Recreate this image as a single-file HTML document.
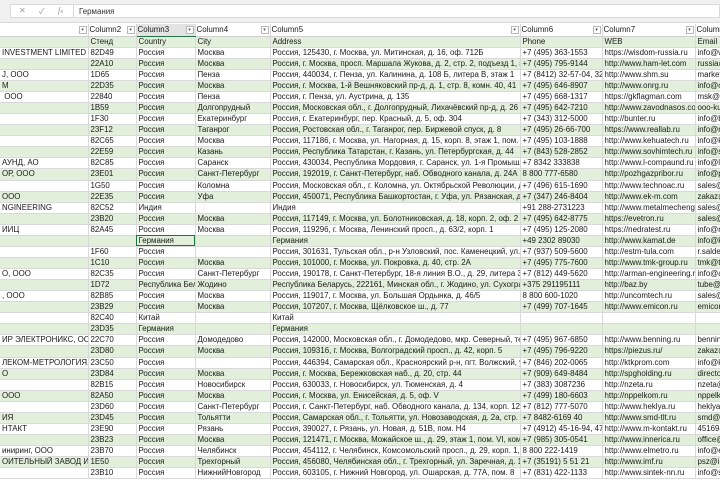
<!DOCTYPE html>
<html><head><meta charset="utf-8"><style>
*{margin:0;padding:0;box-sizing:border-box}
body{width:720px;height:480px;overflow:hidden;background:#fff;font-family:"Liberation Sans","Noto Sans CJK SC",sans-serif;font-size:7.9px;color:#1a1a1a;position:relative}
#fb{position:absolute;left:0;top:0;width:720px;height:23px;background:#f0f0f0;border-bottom:1px solid #d8d8d8}
#fbox{position:absolute;left:10px;top:4px;width:710px;height:14px;background:#fff;border:1px solid #dadada}
#fdiv{position:absolute;left:62px;top:0;width:1px;height:12px;background:#dadada}
.ic{position:absolute;top:1px;color:#9a9a9a;font-size:8px}
#ftxt{position:absolute;left:68px;top:2px;font-size:7.9px;color:#333}
table{position:absolute;left:0;top:24px;border-collapse:collapse;table-layout:fixed;width:720px}
td{height:11.07px;padding:0 0 0 2px;border-right:1px solid #d9d9d9;border-bottom:1px solid #d9d9d9;white-space:nowrap;overflow:hidden;line-height:10px;vertical-align:middle}
tr.h td{height:12.2px;background:#fff;position:relative;border-bottom:1px solid #cfcfcf;padding-left:1px}
tr.h td.sel{background:#e3e3e3;border-bottom:1px solid #217346}
.dd{position:absolute;right:1px;top:2px;width:8px;height:8px;border:1px solid #b8b8b8;background:#fff;font-size:5px;line-height:7px;text-align:center;color:#555}
tr:nth-child(even) td{background:#e2efda}
tr.h td{background:#fff}
td.cur{outline:1.5px solid #217346;outline-offset:-1px}
</style></head><body>
<div id="fb"><div id="fbox"><span class="ic" style="left:8px">✕</span><span class="ic" style="left:28px">✓</span><span class="ic" style="left:47px;font-style:italic;font-family:'Liberation Serif',serif">f<small>x</small></span><div id="fdiv"></div><span id="ftxt">Германия</span></div></div>
<table>
<colgroup><col style="width:88px"><col style="width:48px"><col style="width:59px"><col style="width:75px"><col style="width:250px"><col style="width:82px"><col style="width:93px"><col style="width:25px"></colgroup>
<tr class="h"><td><span class="dd">▾</span></td><td>Column2<span class="dd">▾</span></td><td class="sel">Column3<span class="dd">▾</span></td><td>Column4<span class="dd">▾</span></td><td>Column5<span class="dd">▾</span></td><td>Column6<span class="dd">▾</span></td><td>Column7<span class="dd">▾</span></td><td>Column8</td></tr>
<tr><td></td><td>Стенд</td><td>Country</td><td>City</td><td>Address</td><td>Phone</td><td>WEB</td><td>Email</td></tr>
<tr><td>INVESTMENT LIMITED</td><td>82D49</td><td>Россия</td><td>Москва</td><td>Россия, 125430, г. Москва, ул. Митинская, д. 16, оф. 712Б</td><td>+7 (495) 363-1553</td><td>https://wisdom-russia.ru</td><td>info@w</td></tr>
<tr><td></td><td>22A10</td><td>Россия</td><td>Москва</td><td>Россия, г. Москва, просп. Маршала Жукова, д. 2, стр. 2, подъезд 1, этаж</td><td>+7 (495) 795-9144</td><td>http://www.ham-let.com</td><td>russia@</td></tr>
<tr><td>J, ООО</td><td>1D65</td><td>Россия</td><td>Пенза</td><td>Россия, 440034, г. Пенза, ул. Калинина, д. 108 Б, литера В, этаж 1</td><td>+7 (8412) 32-57-04, 32-24</td><td>http://www.shm.su</td><td>market</td></tr>
<tr><td>М</td><td>22D35</td><td>Россия</td><td>Москва</td><td>Россия, г. Москва, 1-й Вешняковский пр-д, д. 1, стр. 8, комн. 40, 41</td><td>+7 (495) 646-8907</td><td>http://www.onrg.ru</td><td>info@o</td></tr>
<tr><td>&nbsp;ООО</td><td>22840</td><td>Россия</td><td>Пенза</td><td>Россия, г. Пенза, ул. Аустрина, д. 135</td><td>+7 (495) 668-1317</td><td>https://gkflagman.com</td><td>msk@g</td></tr>
<tr><td></td><td>1B59</td><td>Россия</td><td>Долгопрудный</td><td>Россия, Московская обл., г. Долгопрудный, Лихачёвский пр-д, д. 26</td><td>+7 (495) 642-7210</td><td>http://www.zavodnasos.com</td><td>ooo-ku</td></tr>
<tr><td></td><td>1F30</td><td>Россия</td><td>Екатеринбург</td><td>Россия, г. Екатеринбург, пер. Красный, д. 5, оф. 304</td><td>+7 (343) 312-5000</td><td>http://bunter.ru</td><td>info@b</td></tr>
<tr><td></td><td>23F12</td><td>Россия</td><td>Таганрог</td><td>Россия, Ростовская обл., г. Таганрог, пер. Биржевой спуск, д. 8</td><td>+7 (495) 26-66-700</td><td>https://www.reallab.ru</td><td>info@r</td></tr>
<tr><td></td><td>82C65</td><td>Россия</td><td>Москва</td><td>Россия, 117186, г. Москва, ул. Нагорная, д. 15, корп. 8, этаж 1, пом. I, оф</td><td>+7 (495) 103-1888</td><td>http://www.kehuatech.ru</td><td>info@k</td></tr>
<tr><td></td><td>22E59</td><td>Россия</td><td>Казань</td><td>Россия, Республика Татарстан, г. Казань, ул. Петербургская, д. 44</td><td>+7 (843) 528-2852</td><td>http://www.sovhimtech.ru</td><td>info@s</td></tr>
<tr><td>АУНД, АО</td><td>82C85</td><td>Россия</td><td>Саранск</td><td>Россия, 430034, Республика Мордовия, г. Саранск, ул. 1-я Промышленная</td><td>+7 8342 333838</td><td>http://www.l-compaund.ru</td><td>info@l</td></tr>
<tr><td>ОР, ООО</td><td>23E01</td><td>Россия</td><td>Санкт-Петербург</td><td>Россия, 192019, г. Санкт-Петербург, наб. Обводного канала, д. 24А</td><td>8 800 777-6580</td><td>http://pozhgazpribor.ru</td><td>info@p</td></tr>
<tr><td></td><td>1G50</td><td>Россия</td><td>Коломна</td><td>Россия, Московская обл., г. Коломна, ул. Октябрьской Революции, д. 4</td><td>+7 (496) 615-1690</td><td>http://www.technoac.ru</td><td>sales@</td></tr>
<tr><td>ООО</td><td>22E35</td><td>Россия</td><td>Уфа</td><td>Россия, 450071, Республика Башкортостан, г. Уфа, ул. Рязанская, д. 10</td><td>+7 (347) 246-8404</td><td>http://www.ek-m.com</td><td>zakaz@</td></tr>
<tr><td>NGINEERING</td><td>82C52</td><td>Индия</td><td></td><td>Индия</td><td>+91 288-2731223</td><td>http://www.metalmechengineering</td><td>sales@</td></tr>
<tr><td></td><td>23B20</td><td>Россия</td><td>Москва</td><td>Россия, 117149, г. Москва, ул. Болотниковская, д. 18, корп. 2, оф. 2</td><td>+7 (495) 642-8775</td><td>https://evetron.ru</td><td>sales@</td></tr>
<tr><td>ИИЦ</td><td>82A45</td><td>Россия</td><td>Москва</td><td>Россия, 119296, г. Москва, Ленинский просп., д. 63/2, корп. 1</td><td>+7 (495) 125-2080</td><td>https://nedratest.ru</td><td>info@n</td></tr>
<tr><td></td><td></td><td class="cur">Германия</td><td></td><td>Германия</td><td>+49 2302 89030</td><td>http://www.kamat.de</td><td>info@k</td></tr>
<tr><td></td><td>1F60</td><td>Россия</td><td></td><td>Россия, 301631, Тульская обл., р-н Узловский, пос. Каменецкий, ул. Це</td><td>+7 (937) 509-5600</td><td>http://estm-tula.com</td><td>r.salde</td></tr>
<tr><td></td><td>1C10</td><td>Россия</td><td>Москва</td><td>Россия, 101000, г. Москва, ул. Покровка, д. 40, стр. 2А</td><td>+7 (495) 775-7600</td><td>http://www.tmk-group.ru</td><td>tmk@t</td></tr>
<tr><td>О, ООО</td><td>82C35</td><td>Россия</td><td>Санкт-Петербург</td><td>Россия, 190178, г. Санкт-Петербург, 18-я линия В.О., д. 29, литера 3, кор</td><td>+7 (812) 449-5620</td><td>http://arman-engineering.ru</td><td>info@a</td></tr>
<tr><td></td><td>1D72</td><td>Республика Бел</td><td>Жодино</td><td>Республика Беларусь, 222161, Минская обл., г. Жодино, ул. Сухоградская</td><td>+375 291195111</td><td>http://baz.by</td><td>tube@</td></tr>
<tr><td>, ООО</td><td>82B85</td><td>Россия</td><td>Москва</td><td>Россия, 119017, г. Москва, ул. Большая Ордынка, д. 46/5</td><td>8 800 600-1020</td><td>http://uncomtech.ru</td><td>sales@</td></tr>
<tr><td></td><td>23B29</td><td>Россия</td><td>Москва</td><td>Россия, 107207, г. Москва, Щёлковское ш., д. 77</td><td>+7 (499) 707-1645</td><td>http://www.emicon.ru</td><td>emicon</td></tr>
<tr><td></td><td>82C40</td><td>Китай</td><td></td><td>Китай</td><td></td><td></td><td></td></tr>
<tr><td></td><td>23D35</td><td>Германия</td><td></td><td>Германия</td><td></td><td></td><td></td></tr>
<tr><td>ИР ЭЛЕКТРОНИКС, ООО</td><td>22C70</td><td>Россия</td><td>Домодедово</td><td>Россия, 142000, Московская обл., г. Домодедово, мкр. Северный, терр</td><td>+7 (495) 967-6850</td><td>http://www.benning.ru</td><td>bennin</td></tr>
<tr><td></td><td>23D80</td><td>Россия</td><td>Москва</td><td>Россия, 109316, г. Москва, Волгоградский просп., д. 42, корп. 5</td><td>+7 (495) 796-9220</td><td>https://piezus.ru/</td><td>zakaz@</td></tr>
<tr><td>ЛЕКОМ-МЕТРОЛОГИЯ, НП</td><td>23C50</td><td>Россия</td><td></td><td>Россия, 446394, Самарская обл., Красноярский р-н, пгт. Волжский, ул. Г</td><td>+7 (846) 202-0065</td><td>http://ktkprom.com</td><td>info@k</td></tr>
<tr><td>О</td><td>23D84</td><td>Россия</td><td>Москва</td><td>Россия, г. Москва, Бережковская наб., д. 20, стр. 44</td><td>+7 (909) 649-8484</td><td>http://spgholding.ru</td><td>directo</td></tr>
<tr><td></td><td>82B15</td><td>Россия</td><td>Новосибирск</td><td>Россия, 630033, г. Новосибирск, ул. Тюменская, д. 4</td><td>+7 (383) 3087236</td><td>http://nzeta.ru</td><td>nzeta@</td></tr>
<tr><td>ООО</td><td>82A50</td><td>Россия</td><td>Москва</td><td>Россия, г. Москва, ул. Енисейская, д. 5, оф. V</td><td>+7 (499) 180-6603</td><td>http://nppelkom.ru</td><td>nppelk</td></tr>
<tr><td></td><td>23D60</td><td>Россия</td><td>Санкт-Петербург</td><td>Россия, г. Санкт-Петербург, наб. Обводного канала, д. 134, корп. 12</td><td>+7 (812) 777-5070</td><td>http://www.heklya.ru</td><td>heklya</td></tr>
<tr><td>ИЯ</td><td>23D45</td><td>Россия</td><td>Тольятти</td><td>Россия, Самарская обл., г. Тольятти, ул. Новозаводская, д. 2а, стр. 309</td><td>+7 8482-6169 40</td><td>http://www.smd-tlt.ru</td><td>smd@</td></tr>
<tr><td>НТАКТ</td><td>23E90</td><td>Россия</td><td>Рязань</td><td>Россия, 390027, г. Рязань, ул. Новая, д. 51В, пом. Н4</td><td>+7 (4912) 45-16-94, 47-04</td><td>http://www.m-kontakt.ru</td><td>451694</td></tr>
<tr><td></td><td>23B23</td><td>Россия</td><td>Москва</td><td>Россия, 121471, г. Москва, Можайское ш., д. 29, этаж 1, пом. VI, комн. 3</td><td>+7 (985) 305-0541</td><td>http://www.innerica.ru</td><td>office@</td></tr>
<tr><td>иниринг, ООО</td><td>23B70</td><td>Россия</td><td>Челябинск</td><td>Россия, 454112, г. Челябинск, Комсомольский просп., д. 29, корп. 1, пом</td><td>8 800 222-1419</td><td>http://www.elmetro.ru</td><td>info@e</td></tr>
<tr><td>ОИТЕЛЬНЫЙ ЗАВОД ИМЕ</td><td>1E50</td><td>Россия</td><td>Трехгорный</td><td>Россия, 456080, Челябинская обл., г. Трехгорный, ул. Заречная, д. 13</td><td>+7 (35191) 5 51 21</td><td>http://www.imf.ru</td><td>psz@im</td></tr>
<tr><td></td><td>23B10</td><td>Россия</td><td>НижнийНовгород</td><td>Россия, 603105, г. Нижний Новгород, ул. Ошарская, д. 77А, пом. 8</td><td>+7 (831) 422-1133</td><td>http://www.sintek-nn.ru</td><td>info@s</td></tr>
</table>
</body></html>
